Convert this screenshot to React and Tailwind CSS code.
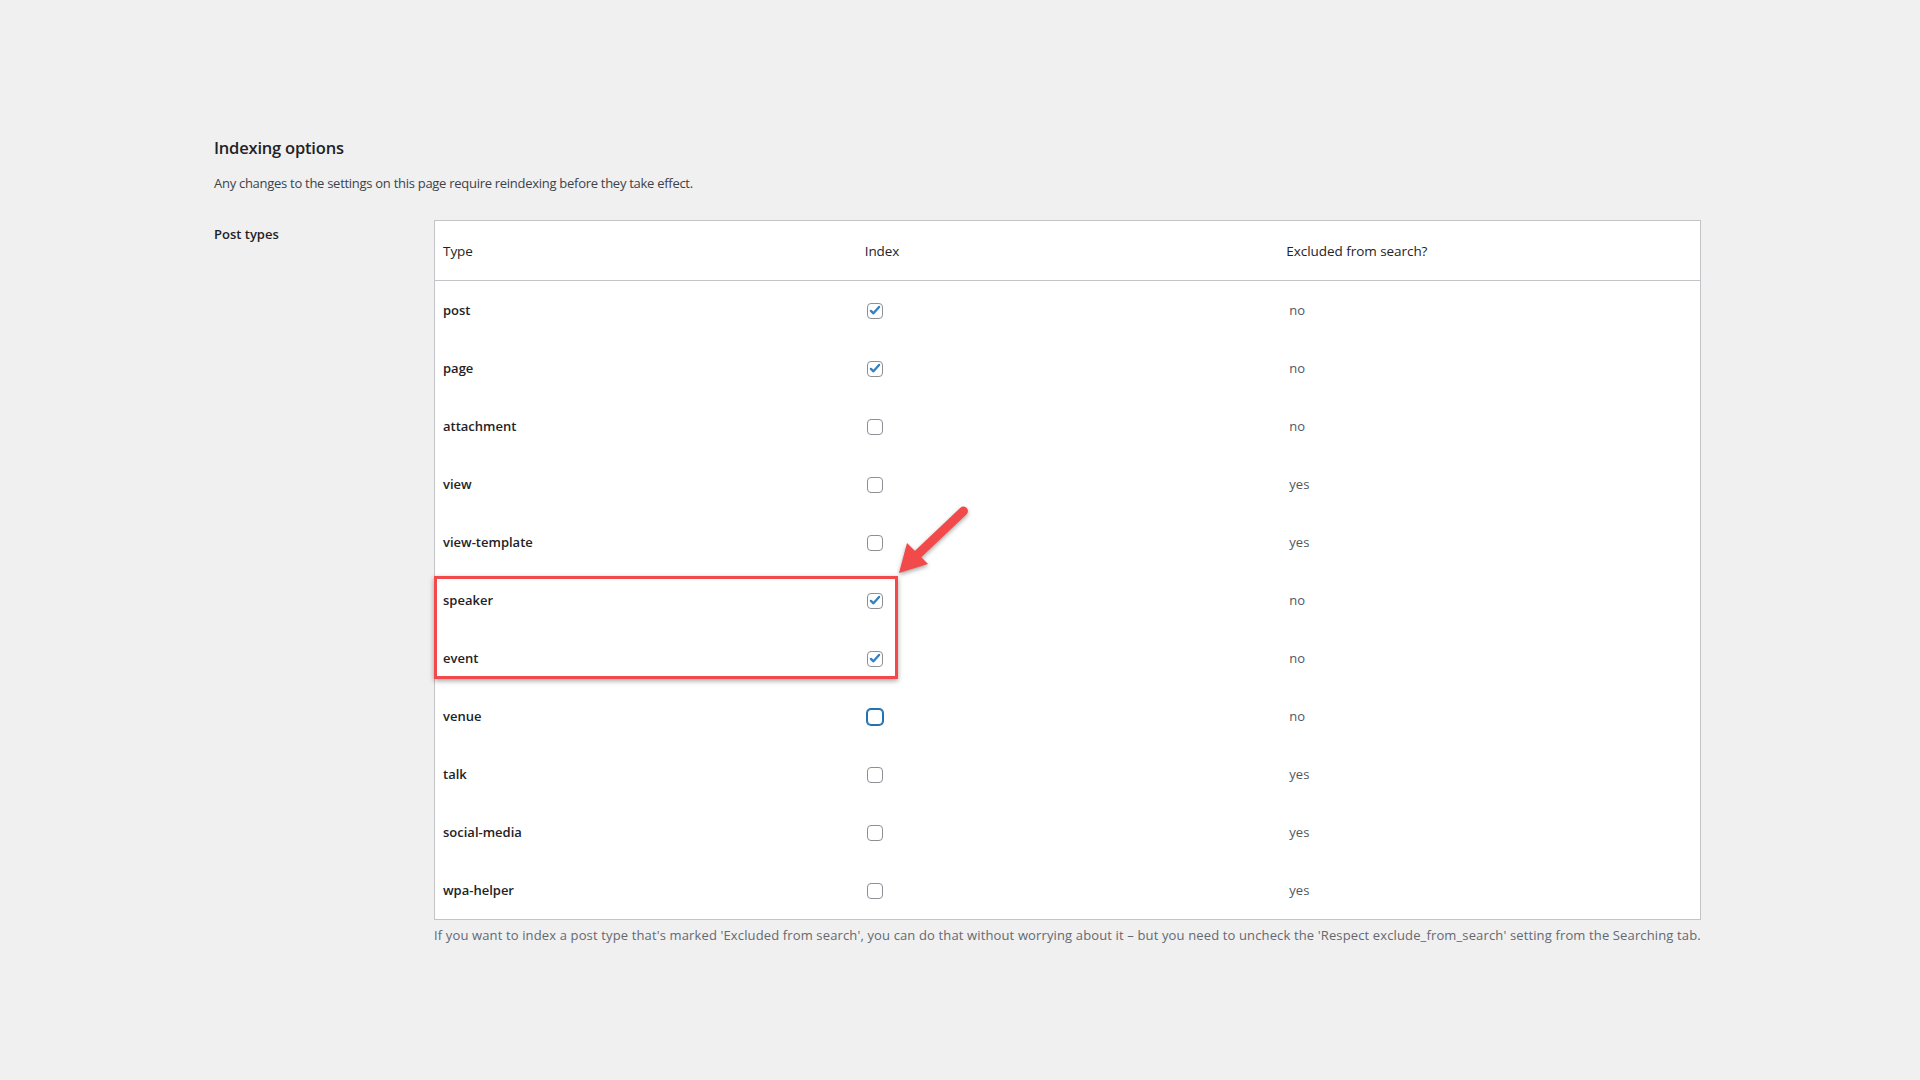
import { useState } from "react";

const postTypes = [
  { name: "post", indexed: true, excluded: "no" },
  { name: "page", indexed: true, excluded: "no" },
  { name: "attachment", indexed: false, excluded: "no" },
  { name: "view", indexed: false, excluded: "yes" },
  { name: "view-template", indexed: false, excluded: "yes" },
  { name: "speaker", indexed: true, excluded: "no" },
  { name: "event", indexed: true, excluded: "no" },
  { name: "venue", indexed: false, excluded: "no", focused: true },
  { name: "talk", indexed: false, excluded: "yes" },
  { name: "social-media", indexed: false, excluded: "yes" },
  { name: "wpa-helper", indexed: false, excluded: "yes" },
];

const Checkbox = ({ checked, focused, onChange }) => (
  <button
    type="button"
    onClick={onChange}
    className={
      focused
        ? "w-4 h-4 rounded-[4px] border border-[#2271b1] shadow-[0_0_0_1px_#2271b1] bg-white flex items-center justify-center"
        : "w-4 h-4 rounded-[4px] border border-[#8c8f94] bg-white flex items-center justify-center"
    }
  >
    {checked && (
      <svg viewBox="0 0 20 20" className="w-[15px] h-[15px]">
        <path
          d="M4.2 10.6l3.6 3.4L15.8 5"
          fill="none"
          stroke="#3582c4"
          strokeWidth="3.4"
          strokeLinecap="round"
          strokeLinejoin="round"
        />
      </svg>
    )}
  </button>
);

const App = () => {
  const [rows, setRows] = useState(postTypes);

  const toggle = (i) =>
    setRows((prev) =>
      prev.map((r, idx) => (idx === i ? { ...r, indexed: !r.indexed } : r))
    );

  return (
    <div
      className="min-h-[1080px] w-full bg-[#f0f0f1] text-[#1d2327] pl-[214px] pt-[136px]"
      style={{ fontFamily: '"Segoe UI", "Open Sans", "Noto Sans", sans-serif' }}
    >
      {/* HEADER */}
      <h2 className="text-[16.5px] leading-[24px] font-semibold tracking-[-0.2px] text-[#1d2327]">
        Indexing options
      </h2>
      <p className="mt-[13px] text-[13px] leading-[20px] tracking-[-0.28px] text-[#3c434a]">
        Any changes to the settings on this page require reindexing before they take effect.
      </p>

      {/* POST TYPES */}
      <div className="flex mt-[27px]">
        <div className="w-[220px] flex-shrink-0 pt-[4px] text-[13px] leading-[20px] font-semibold">
          Post types
        </div>

        <div className="w-[1267px]">
          <div className="relative bg-white border border-[#c3c4c7]">
            <div className="grid grid-cols-3 h-[60px] items-center border-b border-[#c3c4c7] text-[13.5px] tracking-[-0.05px] text-[#1d2327] pt-[1px]">
              <div className="px-2">Type</div>
              <div className="px-2">Index</div>
              <div className="px-2">Excluded from search?</div>
            </div>

            {rows.map((r, i) => (
              <div
                key={r.name}
                className="grid grid-cols-3 h-[58px] items-center text-[13px] pt-[1px]"
              >
                <div className="px-2 font-semibold text-[#1d2327]">{r.name}</div>
                <div className="pl-[10px]">
                  <Checkbox
                    checked={r.indexed}
                    focused={r.focused}
                    onChange={() => toggle(i)}
                  />
                </div>
                <div className="pl-[11px] text-[#50575e]">{r.excluded}</div>
              </div>
            ))}

            {/* Highlight box */}
            <div className="absolute left-[-1px] top-[355px] w-[464px] h-[103px] border-[3px] border-[#f24a4a] shadow-[0_2px_5px_rgba(0,0,0,0.35)] pointer-events-none" />

            {/* Arrow */}
            <svg
              viewBox="0 0 90 90"
              className="absolute left-[455px] top-[279px] w-[90px] h-[90px] pointer-events-none drop-shadow-[0_2px_2px_rgba(0,0,0,0.35)]"
            >
              <line
                x1="73.5"
                y1="11"
                x2="26"
                y2="56"
                stroke="#f24a4a"
                strokeWidth="9"
                strokeLinecap="round"
              />
              <polygon points="9,73 17,43 38,64" fill="#f24a4a" />
            </svg>
          </div>

          <p className="mt-[5px] whitespace-nowrap text-[13px] leading-[20px] tracking-[0.135px] text-[#646970]">
            If you want to index a post type that's marked 'Excluded from search', you can do that without worrying about it – but you need to uncheck the 'Respect exclude_from_search' setting from the Searching tab.
          </p>
        </div>
      </div>
    </div>
  );
};

export default App;
